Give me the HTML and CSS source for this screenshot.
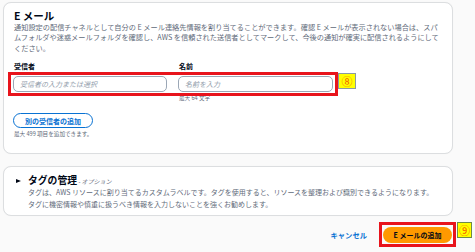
FILE: index.html
```html
<!DOCTYPE html>
<html lang="ja">
<head>
<meta charset="utf-8">
<link rel="stylesheet" href="styles.css">
</head>
<body>
<div class="page">
  <section class="card card-email">
    <h2 class="title">E メール</h2>
    <p class="desc">通知設定の配信チャネルとして自分の E メール連絡先情報を割り当てることができます。確認 E メールが表示されない場合は、スパ<br>ムフォルダや迷惑メールフォルダを確認し、AWS を信頼された送信者としてマークして、今後の通知が確実に配信されるようにして<br>ください。</p>
    <div class="form">
      <div class="label">受信者</div>
      <div class="label">名前</div>
      <div class="input">受信者の入力または選択</div>
      <div class="input">名前を入力</div>
      <div class="hint"></div>
      <div class="hint">最大 64 文字</div>
      <div class="frame frame-form"></div>
      <div class="badge badge-8">⑧</div>
    </div>
    <button class="btn-outline">別の受信者の追加</button>
    <div class="hint hint-bottom">最大 499 項目を追加できます。</div>
  </section>

  <section class="card card-tags">
    <div class="tag-head">
      <span class="caret"></span>
      <span class="tag-title">タグの管理</span>
      <span class="optional">- オプション</span>
    </div>
    <p class="tag-desc">タグは、AWS リソースに割り当てるカスタムラベルです。タグを使用すると、リソースを整理および識別できるようになります。<br>タグに機密情報や慎重に扱うべき情報を入力しないことを強くお勧めします。</p>
  </section>

  <div class="footer">
    <span class="cancel">キャンセル</span>
    <span class="annot">
      <button class="btn-primary">E メールの追加</button>
      <span class="frame frame-btn"></span>
      <span class="badge badge-9">⑨</span>
    </span>
  </div>
</div>
</body>
</html>
```

FILE: styles.css
```css
* { box-sizing: border-box; }
html, body { margin: 0; padding: 0; }
body {
  background: #fafafa;
  font-family: "Noto Sans CJK JP", "Noto Sans", sans-serif;
  color: #000716;
  width: 475px;
  height: 252px;
  overflow: hidden;
}
.page {
  padding: 2px 22px 0 3px;
}
.card {
  background: #fff;
  border: 1px solid #dcdee0;
  border-radius: 8px;
  box-shadow: 0 0 1px rgba(0,0,0,0.06);
}
.card-email {
  padding: 5.5px 9px 15px 9px;
}
.title {
  margin: 0;
  font-size: 10.5px;
  line-height: 13px;
  font-weight: 700;
  padding-left: 1px;
}
.desc {
  margin: 0;
  font-size: 7.2px;
  line-height: 10.5px;
  color: #5f6b7a;
  padding-left: 1px;
  white-space: nowrap;
}
.form {
  position: relative;
  margin-top: 8px;
  display: grid;
  grid-template-columns: 154px 155px;
  column-gap: 11px;
}
.label {
  font-size: 7px;
  line-height: 10px;
  font-weight: 700;
  padding-left: 1px;
}
.input {
  margin-top: 5px;
  height: 16px;
  border: 1px solid #9ba7b6;
  border-radius: 5px;
  font-size: 7px;
  line-height: 14px;
  padding-left: 6px;
  color: #8d99a8;
  font-style: italic;
}
.hint {
  margin-top: 2px;
  font-size: 5.6px;
  line-height: 8px;
  color: #5f6b7a;
  padding-left: 1px;
}
.hint-bottom {
  margin-top: 2px;
}
.frame {
  position: absolute;
  border: 3px solid #e8141c;
}
.frame-form {
  left: -5px;
  top: 11px;
  width: 330px;
  height: 24px;
}
.badge {
  position: absolute;
  display: flex;
  align-items: center;
  justify-content: center;
  background: #ffff00;
  border: 1px solid #8a9aa0;
  color: #f25c00;
  font-size: 11px;
  line-height: 12px;
}
.badge-8 {
  left: 325px;
  top: 12px;
  width: 18px;
  height: 16px;
}
.btn-outline {
  display: block;
  margin-top: 11px;
  height: 15px;
  width: 80px;
  padding: 0;
  border: 1.5px solid #0972d3;
  border-radius: 8px;
  background: #fff;
  color: #0972d3;
  font-family: inherit;
  font-size: 7px;
  line-height: 12px;
  font-weight: 700;
}
.card-tags {
  margin-top: 12px;
  padding: 8px 9px 5px 9px;
}
.tag-head {
  display: flex;
  align-items: center;
  height: 11px;
}
.caret {
  width: 0;
  height: 0;
  margin-left: 3px;
  border-top: 2.5px solid transparent;
  border-bottom: 2.5px solid transparent;
  border-left: 5px solid #000716;
}
.tag-title {
  margin-left: 7px;
  font-size: 9.8px;
  line-height: 11px;
  font-weight: 700;
}
.optional {
  margin-left: 1px;
  font-size: 6px;
  font-style: italic;
  color: #5f6b7a;
  padding-top: 2px;
}
.tag-desc {
  margin: 0;
  padding-left: 15px;
  font-size: 7px;
  line-height: 12px;
  color: #5f6b7a;
}
.footer {
  margin-top: 11px;
  display: flex;
  justify-content: flex-end;
  align-items: center;
  gap: 16px;
  padding-right: 1px;
}
.cancel {
  color: #0972d3;
  font-size: 7.3px;
  font-weight: 700;
}
.annot {
  position: relative;
  display: block;
}
.btn-primary {
  display: block;
  width: 69px;
  height: 16px;
  padding: 0;
  border: none;
  border-radius: 8px;
  background: #ff9900;
  color: #000716;
  font-family: inherit;
  font-size: 7px;
  line-height: 16px;
  font-weight: 700;
}
.frame-btn {
  left: -4px;
  top: -5px;
  width: 77px;
  height: 25px;
}
.badge-9 {
  left: 74px;
  top: -5px;
  width: 15px;
  height: 16px;
  border-color: #6e8a4a;
}
```
